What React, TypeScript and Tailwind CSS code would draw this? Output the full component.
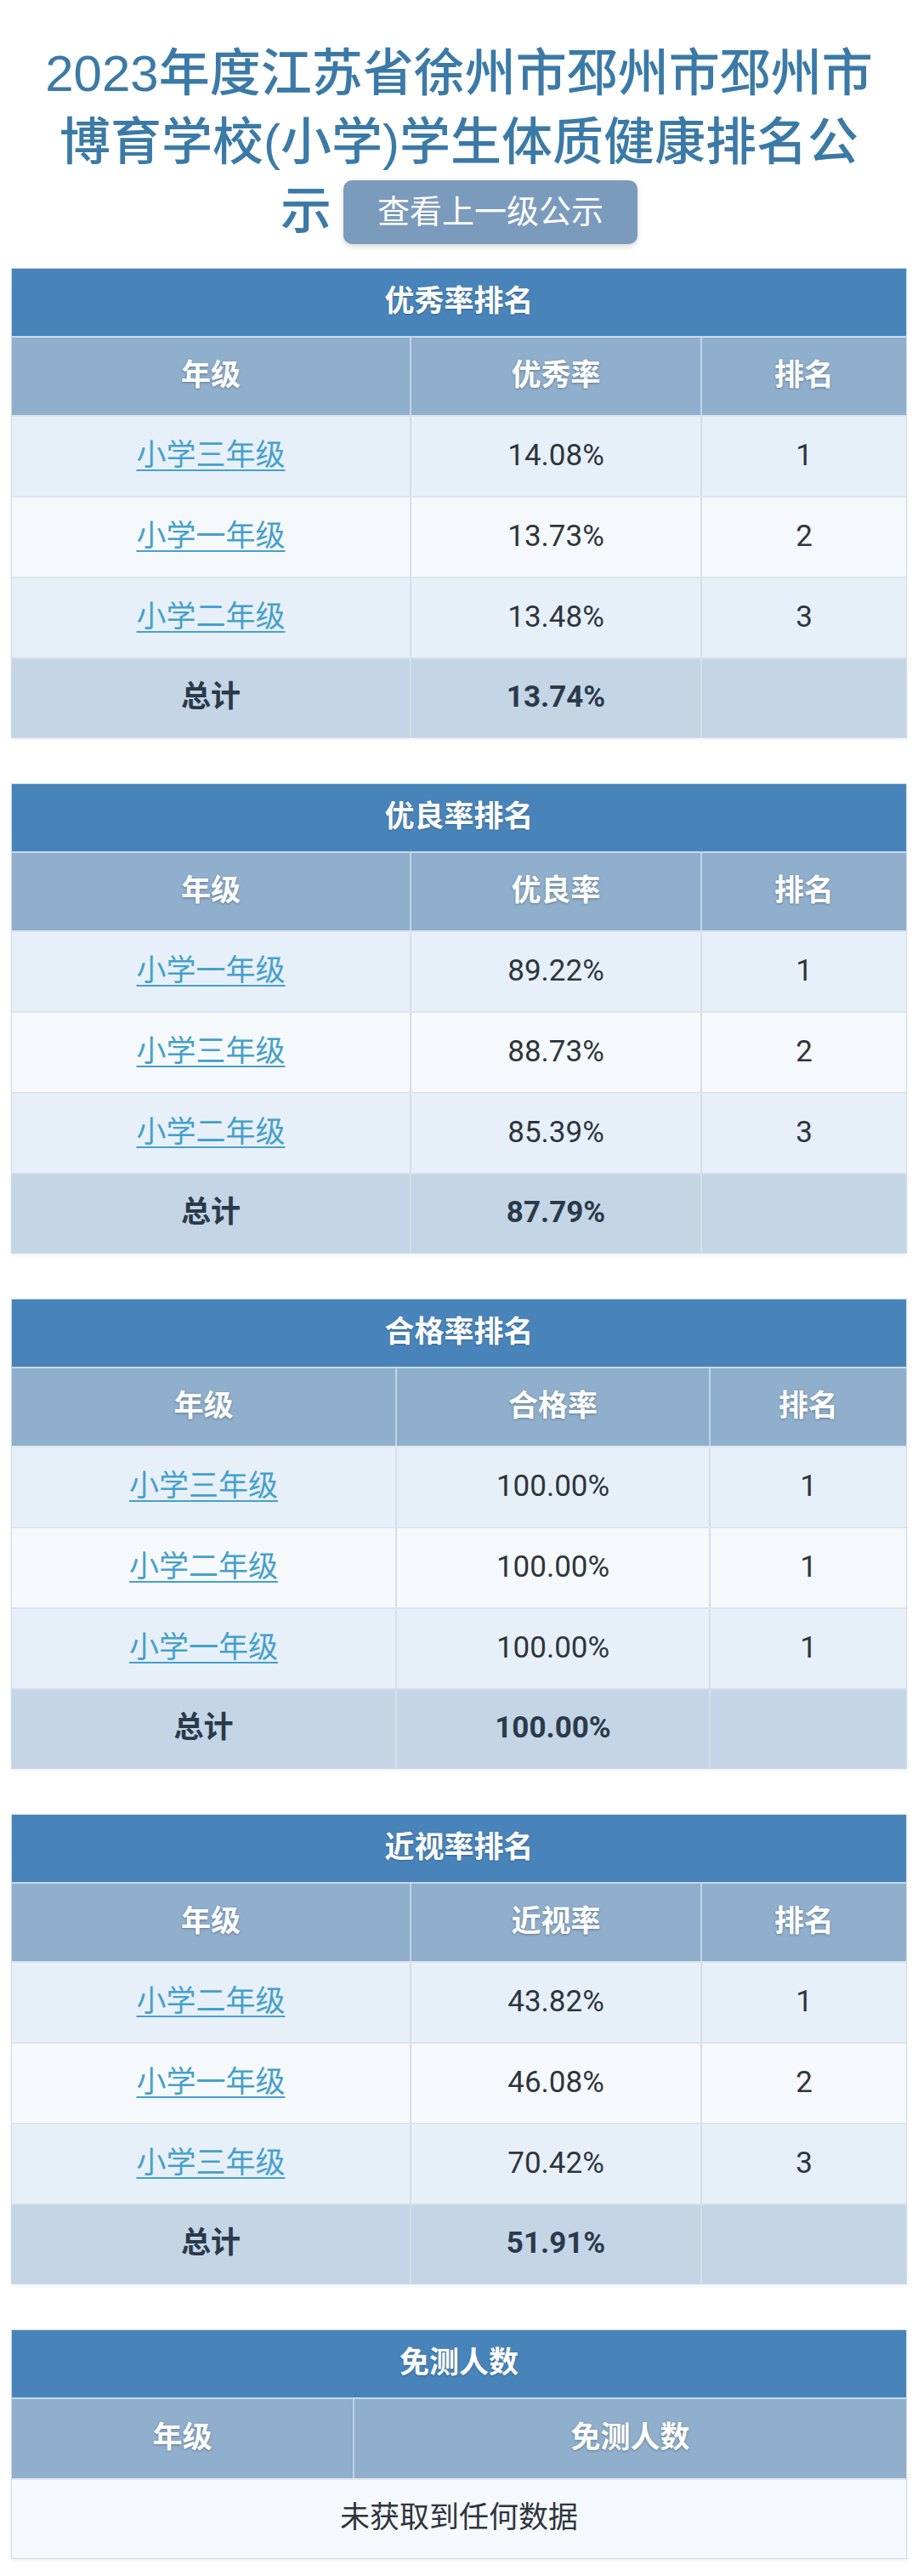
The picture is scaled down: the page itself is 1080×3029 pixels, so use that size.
type Row = { grade: string; value: string; rank: string };

type RankTable = {
  title: string;
  metric: string;
  cols: string;
  rows: Row[];
  total: string;
};

const tables: RankTable[] = [
  {
    title: "优秀率排名",
    metric: "优秀率",
    cols: "grid-cols-[468px_342px_1fr]",
    rows: [
      { grade: "小学三年级", value: "14.08%", rank: "1" },
      { grade: "小学一年级", value: "13.73%", rank: "2" },
      { grade: "小学二年级", value: "13.48%", rank: "3" },
    ],
    total: "13.74%",
  },
  {
    title: "优良率排名",
    metric: "优良率",
    cols: "grid-cols-[468px_342px_1fr]",
    rows: [
      { grade: "小学一年级", value: "89.22%", rank: "1" },
      { grade: "小学三年级", value: "88.73%", rank: "2" },
      { grade: "小学二年级", value: "85.39%", rank: "3" },
    ],
    total: "87.79%",
  },
  {
    title: "合格率排名",
    metric: "合格率",
    cols: "grid-cols-[451px_369px_1fr]",
    rows: [
      { grade: "小学三年级", value: "100.00%", rank: "1" },
      { grade: "小学二年级", value: "100.00%", rank: "1" },
      { grade: "小学一年级", value: "100.00%", rank: "1" },
    ],
    total: "100.00%",
  },
  {
    title: "近视率排名",
    metric: "近视率",
    cols: "grid-cols-[468px_342px_1fr]",
    rows: [
      { grade: "小学二年级", value: "43.82%", rank: "1" },
      { grade: "小学一年级", value: "46.08%", rank: "2" },
      { grade: "小学三年级", value: "70.42%", rank: "3" },
    ],
    total: "51.91%",
  },
];

const rowBg = ["bg-[#e7f0f9]", "bg-[#f6f9fc]", "bg-[#e7f0f9]"];

function TitleBar({ text }: { text: string }) {
  return (
    <div className="h-[79px] bg-[#4884b9] flex items-center justify-center text-white font-bold text-[35px] [text-shadow:0_1px_2px_rgba(0,0,0,0.25)]">
      {text}
    </div>
  );
}

function Cell({ children, first }: { children?: React.ReactNode; first?: boolean }) {
  return (
    <div
      className={
        "flex items-center justify-center " +
        (first ? "" : "border-l-2 border-[#d6dee7]")
      }
    >
      {children}
    </div>
  );
}

function HeadCell({ children, first }: { children: React.ReactNode; first?: boolean }) {
  return (
    <div
      className={
        "flex items-center justify-center " +
        (first ? "" : "border-l-2 border-[#c2d4e4]")
      }
    >
      {children}
    </div>
  );
}

function GradeLink({ text }: { text: string }) {
  return (
    <a
      href="#"
      className="text-[#45a0cc] underline decoration-2 underline-offset-[5px]"
    >
      {text}
    </a>
  );
}

function Ranking({ t }: { t: RankTable }) {
  return (
    <div className="border border-[#cbdae8] shadow-[0_2px_4px_rgba(0,0,0,0.06)]">
      <TitleBar text={t.title} />
      <div
        className={
          "grid h-[93px] bg-[#8fafcc] border-t-2 border-[#c6d9ea] text-white font-bold text-[35px] [text-shadow:0_1px_3px_rgba(0,0,0,0.3)] " +
          t.cols
        }
      >
        <HeadCell first>年级</HeadCell>
        <HeadCell>{t.metric}</HeadCell>
        <HeadCell>排名</HeadCell>
      </div>
      {t.rows.map((r, i) => (
        <div
          key={i}
          className={
            "grid h-[95px] border-t-2 border-[#dde4ec] text-[35px] text-[#2e353d] " +
            rowBg[i] +
            " " +
            t.cols
          }
        >
          <Cell first>
            <GradeLink text={r.grade} />
          </Cell>
          <Cell>{r.value}</Cell>
          <Cell>{r.rank}</Cell>
        </div>
      ))}
      <div
        className={
          "grid h-[94px] border-t-2 border-[#d3dfea] bg-[#c4d6e6] text-[35px] font-bold text-[#2b3a4a] " +
          t.cols
        }
      >
        <Cell first>总计</Cell>
        <Cell>{t.total}</Cell>
        <Cell />
      </div>
    </div>
  );
}

export default function App() {
  return (
    <div className="min-h-[3029px] bg-white px-[13px] pb-[22px] [font-family:Roboto,'Noto_Sans_CJK_SC',sans-serif]">
      <h1 className="pt-[46px] mb-[24px] text-center text-[60px] leading-[81px] font-medium text-[#3b7aa7] [font-family:'Liberation_Sans','Noto_Sans_CJK_SC',sans-serif]">
        2023年度江苏省徐州市邳州市邳州市
        <br />
        博育学校(小学)学生体质健康排名公
        <br />
        示
        <a
          href="#"
          className="ml-[14px] inline-flex h-[75px] items-center rounded-[10px] bg-[#7b9bbc] px-[40px] align-middle text-[38px] font-normal leading-none text-white shadow-[0_3px_6px_rgba(0,0,0,0.15)] relative -top-[4px]"
        >
          查看上一级公示
        </a>
      </h1>

      <div className="flex flex-col gap-[53px]">
        {tables.map((t) => (
          <Ranking key={t.title} t={t} />
        ))}

        <div className="border border-[#cbdae8] shadow-[0_2px_4px_rgba(0,0,0,0.06)]">
          <TitleBar text="免测人数" />
          <div className="grid grid-cols-[401px_1fr] h-[95px] bg-[#8fafcc] border-t-2 border-[#c6d9ea] text-white font-bold text-[35px] [text-shadow:0_1px_3px_rgba(0,0,0,0.3)]">
            <HeadCell first>年级</HeadCell>
            <HeadCell>免测人数</HeadCell>
          </div>
          <div className="h-[94px] border-t-2 border-[#dde4ec] bg-[#f6f9fc] flex items-center justify-center text-[35px] text-[#2e353d]">
            未获取到任何数据
          </div>
        </div>
      </div>
    </div>
  );
}
